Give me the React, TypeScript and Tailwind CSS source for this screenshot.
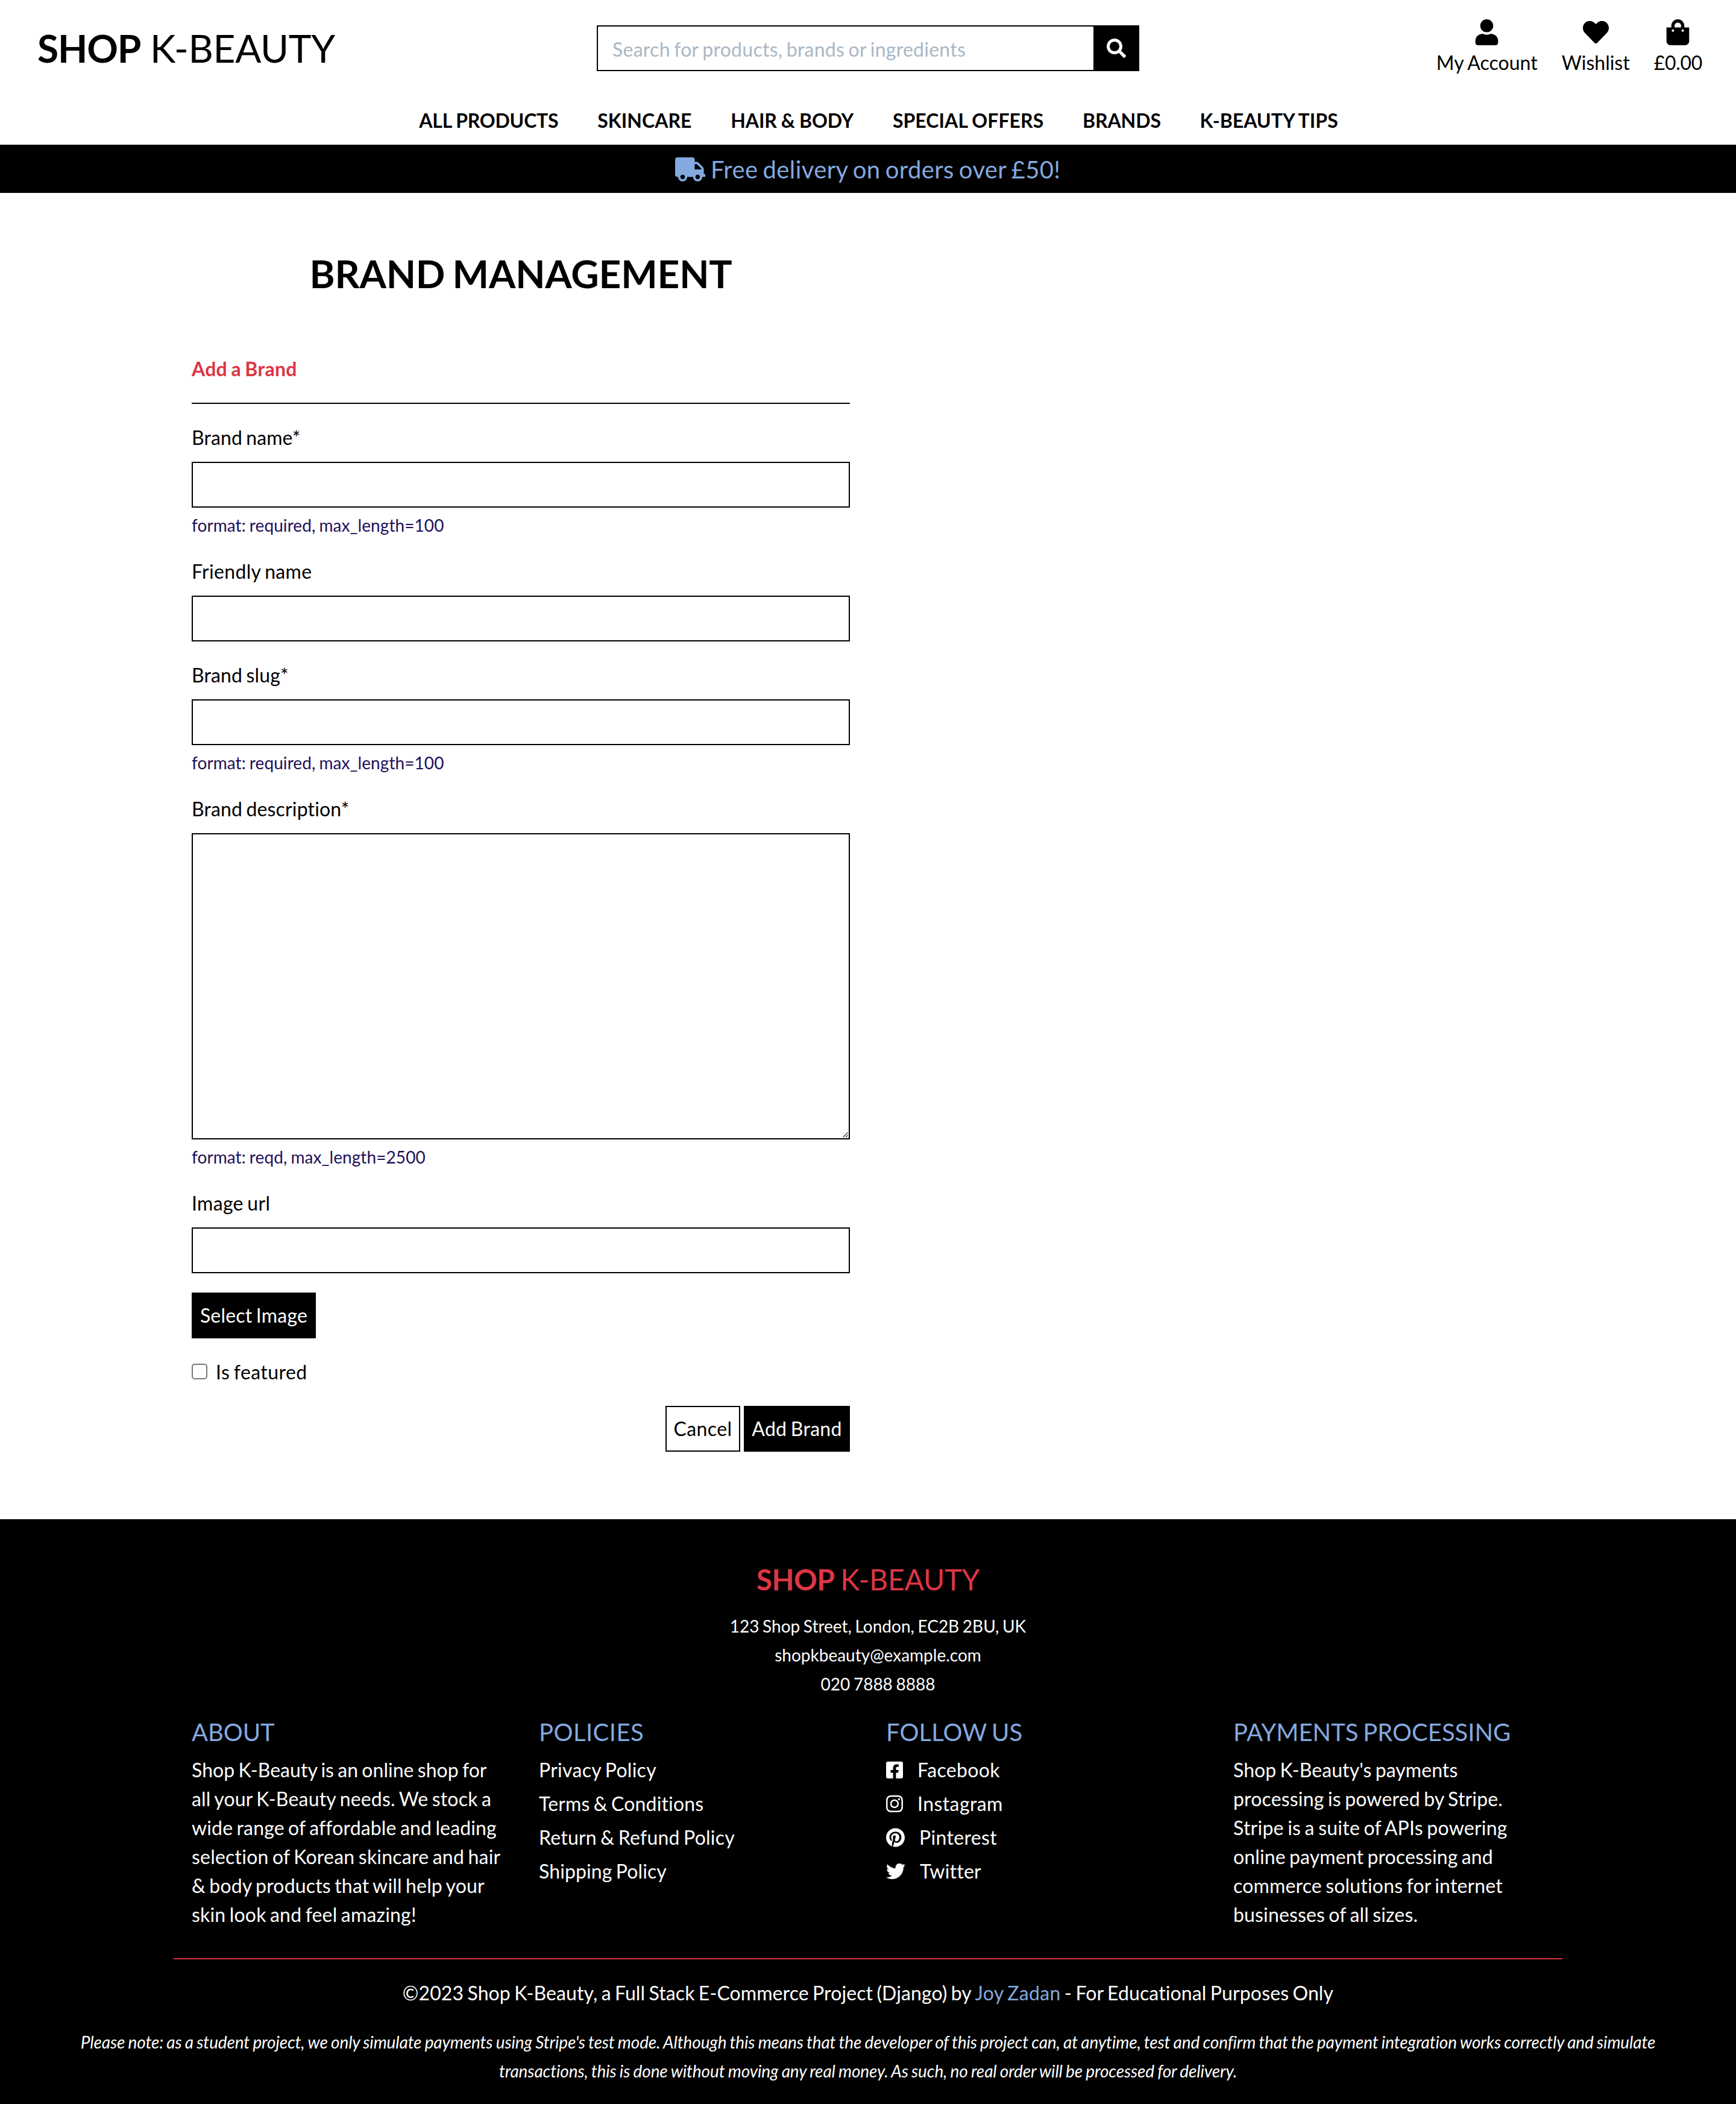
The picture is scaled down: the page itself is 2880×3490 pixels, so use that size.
import type { ReactNode } from "react";
import {
  FaFacebookSquare,
  FaHeart,
  FaInstagram,
  FaPinterest,
  FaSearch,
  FaShoppingBag,
  FaTruck,
  FaTwitter,
  FaUser,
} from "react-icons/fa";

type Text = { text: string; track: string };

const navItems: Text[] = [
  { text: "ALL PRODUCTS", track: "tracking-[-0.2px]" },
  { text: "SKINCARE", track: "tracking-[0.05px]" },
  { text: "HAIR & BODY", track: "tracking-[-0.1px]" },
  { text: "SPECIAL OFFERS", track: "tracking-[0.06px]" },
  { text: "BRANDS", track: "tracking-[-0.1px]" },
  { text: "K-BEAUTY TIPS", track: "tracking-[0.03px]" },
];

const about: Text[] = [
  { text: "Shop K-Beauty is an online shop for", track: "tracking-[0.04px]" },
  { text: "all your K-Beauty needs. We stock a", track: "tracking-[0.19px]" },
  { text: "wide range of affordable and leading", track: "tracking-[0.15px]" },
  { text: "selection of Korean skincare and hair", track: "tracking-[0.22px]" },
  { text: "& body products that will help your", track: "tracking-[0.17px]" },
  { text: "skin look and feel amazing!", track: "tracking-[0.19px]" },
];

const policies: Text[] = [
  { text: "Privacy Policy", track: "tracking-[0.28px]" },
  { text: "Terms & Conditions", track: "tracking-[0.15px]" },
  { text: "Return & Refund Policy", track: "tracking-[0.22px]" },
  { text: "Shipping Policy", track: "tracking-[0.1px]" },
];

const payments: Text[] = [
  { text: "Shop K-Beauty's payments", track: "tracking-[0.06px]" },
  { text: "processing is powered by Stripe.", track: "tracking-[0.17px]" },
  { text: "Stripe is a suite of APIs powering", track: "tracking-[0.24px]" },
  { text: "online payment processing and", track: "tracking-[0.12px]" },
  { text: "commerce solutions for internet", track: "tracking-[0.17px]" },
  { text: "businesses of all sizes.", track: "tracking-[0.15px]" },
];

function UserLink({ icon, label, track }: { icon: ReactNode; label: string; track: string }) {
  return (
    <a className="flex flex-col items-center gap-[5px] text-[43px] leading-none">
      {icon}
      <span className={`text-[32px] leading-[48px] ${track}`}>{label}</span>
    </a>
  );
}

function Header() {
  return (
    <header className="h-[240px] bg-white">
      <div className="grid h-[160px] grid-cols-[1fr_900px_1fr] items-center">
        <a className="pl-[62px] text-[64px] leading-[96px] tracking-[-0.35px] [word-spacing:-0.5px]">
          <strong className="font-bold tracking-[-1.1px]">SHOP</strong> K-BEAUTY
        </a>
        <form className="flex h-[76px]">
          <input
            className="min-w-0 flex-1 border-2 border-r-0 border-black px-6 pt-[3px] text-[32px] tracking-[0.26px] [word-spacing:-2px] placeholder:text-[#aab7c4] placeholder:opacity-100"
            placeholder="Search for products, brands or ingredients"
          />
          <button type="button" className="flex w-[76px] items-center justify-center bg-black text-[32px] text-white">
            <FaSearch />
          </button>
        </form>
        <div className="flex justify-end gap-[40px] pr-[56px]">
          <UserLink icon={<FaUser />} label="My Account" track="tracking-[0.02px] [word-spacing:-0.8px]" />
          <UserLink icon={<FaHeart />} label="Wishlist" track="tracking-[0px]" />
          <UserLink icon={<FaShoppingBag />} label="£0.00" track="tracking-[-0.3px]" />
        </div>
      </div>
      <nav className="flex justify-center gap-[64.7px] pt-4 pl-[35px] text-[32px] leading-[48px] font-bold [word-spacing:-0.6px]">
        {navItems.map((item) => (
          <a key={item.text} className={item.track}>
            {item.text}
          </a>
        ))}
      </nav>
    </header>
  );
}

type FieldProps = { label: string; track?: string; help?: string; multiline?: boolean };

function Field({ label, track = "tracking-[0.15px]", help, multiline }: FieldProps) {
  return (
    <div className="mb-8">
      <label className={`mb-4 block ${track}`}>{label}</label>
      {multiline ? (
        <div className="relative">
          <textarea className="block h-[508px] w-full resize-none border-2 border-black bg-white" />
          <svg
            className="absolute right-[3px] bottom-[3px] h-[9px] w-[9px]"
            viewBox="0 0 9 9"
            fill="none"
            stroke="#3c3c3c"
            strokeWidth="1.4"
          >
            <path d="M0.5 8.5L8.5 0.5M5 8.5L8.5 5" />
          </svg>
        </div>
      ) : (
        <input className="block h-[76px] w-full border-2 border-black bg-white px-6" />
      )}
      {help && (
        <small className="mt-2 block text-[28px] leading-[42px] tracking-[0.08px] text-[#210f59] [word-spacing:-1.2px]">
          {help}
        </small>
      )}
    </div>
  );
}

function BrandForm() {
  return (
    <main className="h-[2200px] pt-[96px] pl-[318px]">
      <div className="w-[1092px] text-[32px] leading-[48px]">
        <h2 className="mb-[96px] text-center text-[64px] leading-[76px] font-bold tracking-[-0.16px] [word-spacing:-3.2px]">
          BRAND MANAGEMENT
        </h2>
        <h5 className="font-bold tracking-[0.26px] text-[#dc3545] [word-spacing:-1.6px]">Add a Brand</h5>
        <hr className="my-8 border-t-2 border-black" />
        <form>
          <Field label="Brand name*" track="tracking-[0.1px]" help="format: required, max_length=100" />
          <Field label="Friendly name" track="tracking-[0.33px]" />
          <Field label="Brand slug*" help="format: required, max_length=100" />
          <Field label="Brand description*" help="format: reqd, max_length=2500" multiline />
          <Field label="Image url" track="tracking-[0.32px]" />
          <button
            type="button"
            className="block h-[76px] w-[206px] bg-black tracking-[0.2px] text-white [word-spacing:-2px]"
          >
            Select Image
          </button>
          <label className="my-8 flex h-12 items-center tracking-[0.42px]">
            <span className="mr-[14px] -mt-[2px] h-[26px] w-[26px] rounded-[5px] border-2 border-[#767676] bg-white" />
            Is featured
          </label>
          <div className="flex justify-end gap-[6px]">
            <button type="button" className="h-[76px] w-[124px] border-2 border-black bg-white tracking-[0.4px]">
              Cancel
            </button>
            <button
              type="button"
              className="h-[76px] w-[176px] bg-black tracking-[0.3px] text-white [word-spacing:-2px]"
            >
              Add Brand
            </button>
          </div>
        </form>
      </div>
    </main>
  );
}

function Column({ title, track, children }: { title: string; track: string; children: ReactNode }) {
  return (
    <div className="px-[30px]">
      <h4 className={`mb-[15px] pt-px text-[40px] leading-[48px] text-[#84a9df] [word-spacing:-2.5px] ${track}`}>
        {title}
      </h4>
      {children}
    </div>
  );
}

function Paragraph({ lines }: { lines: Text[] }) {
  return (
    <p className="whitespace-nowrap">
      {lines.map((line) => (
        <span key={line.text} className={`block ${line.track}`}>
          {line.text}
        </span>
      ))}
    </p>
  );
}

function Social({ icon, name, track }: { icon: ReactNode; name: string; track: string }) {
  return (
    <li className={`flex items-center gap-6 ${track}`}>
      {icon}
      {name}
    </li>
  );
}

function Footer() {
  return (
    <footer className="h-[970px] bg-black pt-[71px] text-[32px] leading-[48px] text-white">
      <h3 className="text-center text-[48px] leading-[58px] tracking-[-0.15px] text-[#dc3545] [word-spacing:-2.5px]">
        <strong className="font-bold tracking-[-0.5px]">SHOP</strong> K-BEAUTY
      </h3>
      <ul className="mt-6 pl-[33px] text-center text-[28px] [word-spacing:-1.6px]">
        <li>123 Shop Street, London, EC2B 2BU, UK</li>
        <li>shopkbeauty@example.com</li>
        <li>020 7888 8888</li>
      </ul>
      <div className="mx-auto mt-[31px] grid h-[402px] w-[2304px] grid-cols-4 border-b-2 border-[#dc3545]">
        <Column title="ABOUT" track="tracking-[-0.1px]">
          <Paragraph lines={about} />
        </Column>
        <Column title="POLICIES" track="tracking-[0.45px]">
          <ul className="flex flex-col gap-2">
            {policies.map((policy) => (
              <li key={policy.text} className={policy.track}>
                {policy.text}
              </li>
            ))}
          </ul>
        </Column>
        <Column title="FOLLOW US" track="tracking-[0.08px]">
          <ul className="flex flex-col gap-2">
            <Social icon={<FaFacebookSquare className="h-8 w-7" />} name="Facebook" track="tracking-[0.35px]" />
            <Social icon={<FaInstagram className="h-8 w-7" />} name="Instagram" track="tracking-[0.42px]" />
            <Social icon={<FaPinterest className="h-8 w-[31px]" />} name="Pinterest" track="tracking-[0.35px]" />
            <Social icon={<FaTwitter className="h-8 w-8" />} name="Twitter" track="tracking-[0.22px]" />
          </ul>
        </Column>
        <Column title="PAYMENTS PROCESSING" track="tracking-[0.02px]">
          <Paragraph lines={payments} />
        </Column>
      </div>
      <p className="mt-8 text-center tracking-[0.1px]">
        ©2023 Shop K-Beauty, a Full Stack E-Commerce Project (Django) by{" "}
        <a className="tracking-[0.35px] text-[#84a9df]">Joy Zadan</a>
        <span className="tracking-[0.13px]"> - For Educational Purposes Only</span>
      </p>
      <p className="mt-[33px] text-center text-[28px] tracking-[-0.125px] whitespace-nowrap italic [word-spacing:-1.15px]">
        Please note: as a student project, we only simulate payments using Stripe's test mode. Although this means that
        the developer of this project can, at anytime, test and confirm that the payment integration works correctly and
        simulate
        <br />
        transactions, this is done without moving any real money. As such, no real order will be processed for delivery.
      </p>
    </footer>
  );
}

export default function App() {
  return (
    <div className="h-[3490px] w-[2880px] overflow-hidden bg-white font-['Lato',sans-serif] text-black [font-variant-ligatures:none] [word-spacing:-2px]">
      <Header />
      <div className="flex h-[80px] items-center justify-center gap-[8.5px] bg-black pt-[2px] text-[40px] leading-[60px] tracking-[0.39px] text-[#84a9df] [word-spacing:-2.5px]">
        <FaTruck className="h-10 w-[50px]" />
        <span>Free delivery on orders over £50!</span>
      </div>
      <BrandForm />
      <Footer />
    </div>
  );
}
